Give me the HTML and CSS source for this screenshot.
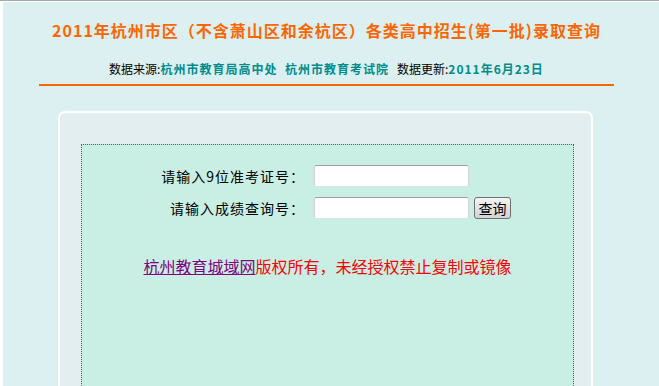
FILE: index.html
```html
<!DOCTYPE html>
<html lang="zh-CN">
<head>
	<meta charset="UTF-8">
	<title>2011年杭州市区各类高中招生(第一批)录取查询</title>
	<link rel="stylesheet" href="styles.css">
</head>
<body>
<div class="frame">
	<div class="head">
		<h1 class="title">2011年杭州市区（不含萧山区和余杭区）各类高中招生(第一批)录取查询</h1>
		<p class="source">数据来源:<b>杭州市教育局高中处&nbsp;&nbsp;杭州市教育考试院</b>&nbsp;&nbsp;&nbsp;数据更新:<b>2011年6月23日</b></p>
	</div>
	<div class="panel">
		<div class="inner">
			<form class="qform" onsubmit="return false">
				<label for="zkz">请输入9位准考证号：</label>
				<div class="field"><input id="zkz" type="text" maxlength="9"></div>
				<label for="cjh">请输入成绩查询号：</label>
				<div class="field"><input id="cjh" type="text"><button class="btn">查询</button></div>
			</form>
			<p class="copy"><a href="#">杭州教育城域网</a>版权所有，未经授权禁止复制或镜像</p>
		</div>
	</div>
</div>
</body>
</html>
```
FILE: styles.css
```css
*{margin:0;padding:0;box-sizing:border-box;}
html,body{height:100%;}
body{background:#fff;border-top:1px solid #a8a8a8;font-family:"Noto Sans CJK SC","DejaVu Sans",sans-serif;color:#000;overflow:hidden;}
.frame{margin:1px 0 0 3px;height:384px;background:#dcf0f2;padding-top:18px;}
.head{width:575px;margin-left:36px;border-bottom:2px solid #ff6600;padding-bottom:7px;text-align:center;}
.title{font-size:16px;line-height:20px;font-weight:bold;color:#ff6600;letter-spacing:1px;}
.source{margin-top:21px;font-size:12px;line-height:16px;}
.source b{color:#008c8c;letter-spacing:1px;}
.panel{margin:25px 0 0 55px;width:535px;height:275px;background:#e3eef0;border:2px solid #fff;border-bottom:none;border-radius:7px 7px 0 0;padding:31px 17px 0 21px;}
.inner{border:1px dotted #008080;border-bottom:none;background:#c9efe5;height:100%;padding-top:20px;}
.qform{display:grid;grid-template-columns:150px auto;column-gap:9px;row-gap:10px;margin-left:73px;align-items:center;}
.qform label{font-size:14px;text-align:right;line-height:22px;letter-spacing:1px;}
.field{display:flex;align-items:center;gap:5px;}
.field input{width:155px;height:22px;border:1px solid;border-color:#a0a0a0 #d4d4d4 #e2e2e2 #d4d4d4;border-radius:2px;background:#fff;font-size:13px;padding:0 3px;}
.btn{width:37px;height:22px;border:1px solid #707070;border-radius:3px;background:linear-gradient(#f4f4f4,#d2d2d2);font-family:inherit;font-size:14px;line-height:18px;color:#000;}
.copy{margin-top:37px;text-align:center;font-size:16px;line-height:20px;color:#f00;}
.copy a{color:#800080;text-decoration:underline;}
```
